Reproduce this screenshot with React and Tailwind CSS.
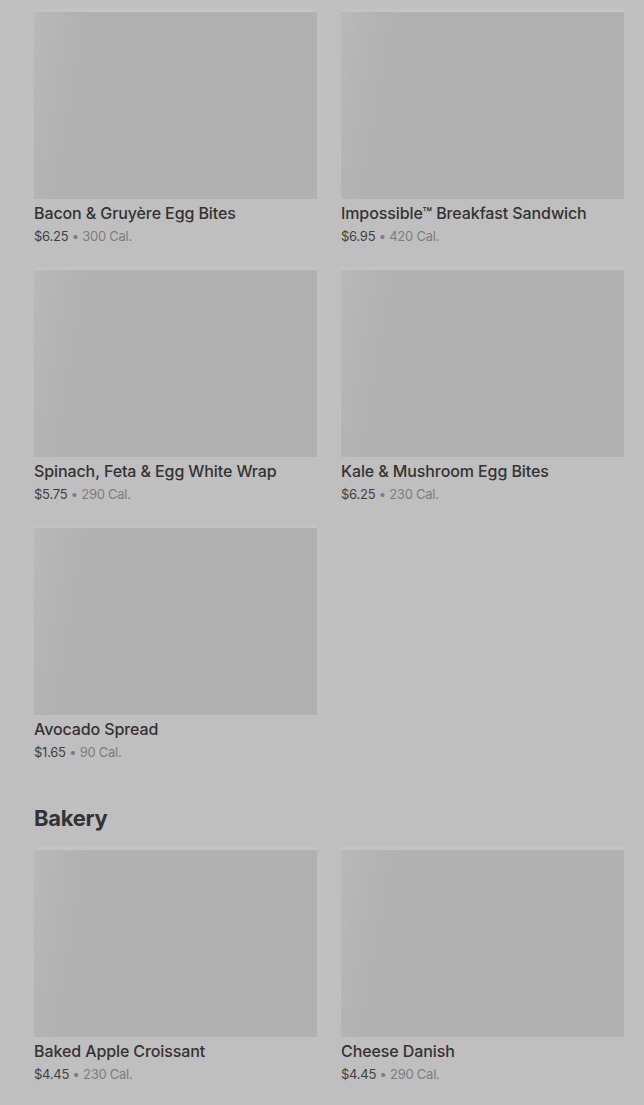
const sections = [
  {
    title: null,
    items: [
      { name: "Bacon & Gruyère Egg Bites", price: "$6.25", cal: "300 Cal." },
      { name: "Impossible™ Breakfast Sandwich", price: "$6.95", cal: "420 Cal." },
      { name: "Spinach, Feta & Egg White Wrap", price: "$5.75", cal: "290 Cal." },
      { name: "Kale & Mushroom Egg Bites", price: "$6.25", cal: "230 Cal." },
      { name: "Avocado Spread", price: "$1.65", cal: "90 Cal." },
    ],
  },
  {
    title: "Bakery",
    items: [
      { name: "Baked Apple Croissant", price: "$4.45", cal: "230 Cal." },
      { name: "Cheese Danish", price: "$4.45", cal: "290 Cal." },
    ],
  },
];

function MenuCard({ item }) {
  return (
    <div className="flex flex-col">
      <div className="h-[187px] w-full bg-[#b1b1b1] bg-[linear-gradient(100deg,#b9b9b9_0%,#b4b4b4_10%,#b1b1b1_18%)] shadow-[0_-3px_0_#c3c3c3]" />
      <div className="mt-[3px] text-[16px] leading-[22px] font-medium text-[#333333] tracking-[-0.1px]">
        {item.name}
      </div>
      <div className="mt-[3px] text-[13px] leading-[18px] tracking-[-0.25px]">
        <span className="text-[#3f3f3f]">{item.price}</span>
        <span className="text-[#7d7d7d]"> • {item.cal}</span>
      </div>
    </div>
  );
}

export default function App() {
  return (
    <div
      className="min-h-screen bg-[#bfbfbf] pl-[34px] pr-[20px] pt-[12px] pb-[30px] overflow-hidden"
      style={{ fontFamily: "Inter, 'Noto Sans', sans-serif" }}
    >
      {sections.map((s, i) => (
        <div key={i}>
          {s.title && (
            <h2 className="mt-[43px] mb-[18px] text-[22px] leading-[28px] font-bold text-[#333333] tracking-[-0.3px]">
              {s.title}
            </h2>
          )}
          <div className="grid grid-cols-2 gap-x-[24px] gap-y-[25px]">
            {s.items.map((item) => (
              <MenuCard key={item.name} item={item} />
            ))}
          </div>
        </div>
      ))}
    </div>
  );
}
